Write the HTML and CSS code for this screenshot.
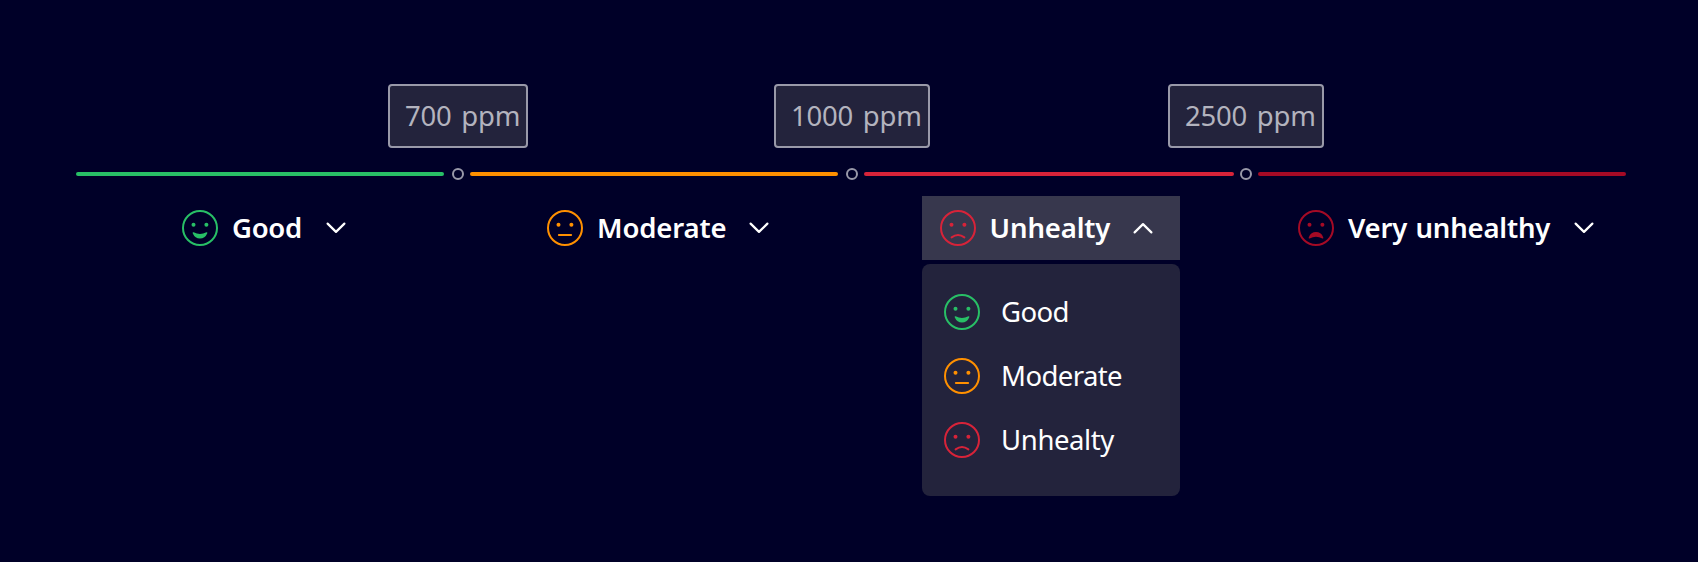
FILE: index.html
```html
<!DOCTYPE html>
<html lang="en">
<head>
<meta charset="utf-8">
<title>Air quality thresholds</title>
<link rel="stylesheet" href="styles.css">
</head>
<body>
<svg class="defs" width="0" height="0" aria-hidden="true">
  <symbol id="face" viewBox="0 0 36 36">
    <circle cx="18" cy="18" r="17" fill="none" stroke="currentColor" stroke-width="2"/>
    <circle cx="11.5" cy="14.7" r="2" fill="currentColor"/>
    <circle cx="24.4" cy="14.7" r="2" fill="currentColor"/>
  </symbol>
  <symbol id="good" viewBox="0 0 36 36">
    <use href="#face"/>
    <path d="M11.6 22.2Q18 25.6 24.4 22.2Q25.8 22 25.2 23.4Q23 28.4 18 28.4Q13 28.4 10.8 23.4Q10.2 22 11.6 22.2Z" fill="currentColor"/>
  </symbol>
  <symbol id="moderate" viewBox="0 0 36 36">
    <use href="#face"/>
    <path d="M11.9 25H24.1" stroke="currentColor" stroke-width="2" stroke-linecap="round"/>
  </symbol>
  <symbol id="unhealthy" viewBox="0 0 36 36">
    <use href="#face"/>
    <path d="M11.6 27.4Q18 22.6 24.4 27.4" fill="none" stroke="currentColor" stroke-width="2" stroke-linecap="round"/>
  </symbol>
  <symbol id="very" viewBox="0 0 36 36">
    <use href="#face"/>
    <path d="M11.6 28.4Q18 25 24.4 28.4Q25.8 28.6 25.2 27.2Q23 22.1 18 22.1Q13 22.1 10.8 27.2Q10.2 28.6 11.6 28.4Z" fill="currentColor"/>
  </symbol>
  <symbol id="chevron" viewBox="0 0 20 12">
    <path d="M1.6 1.6L10 9.9L18.4 1.6" fill="none" stroke="currentColor" stroke-width="2.2" stroke-linecap="round" stroke-linejoin="round"/>
  </symbol>
</svg>
<main class="scale">
  <div class="inputs">
    <div class="input input-700"><span class="value">700 ppm</span></div>
    <div class="input input-1000"><span class="value">1000 ppm</span></div>
    <div class="input input-2500"><span class="value">2500 ppm</span></div>
  </div>
  <div class="track">
    <span class="segment bg-good"></span><span class="knob"></span>
    <span class="segment bg-moderate"></span><span class="knob"></span>
    <span class="segment segment-wide bg-unhealthy"></span><span class="knob knob-last"></span>
    <span class="segment bg-very"></span>
  </div>
  <div class="levels">
    <div class="level level-good">
      <svg class="icon good"><use href="#good"/></svg>
      <span class="label">Good</span>
      <svg class="chevron"><use href="#chevron"/></svg>
    </div>
    <div class="level level-moderate">
      <svg class="icon moderate"><use href="#moderate"/></svg>
      <span class="label">Moderate</span>
      <svg class="chevron"><use href="#chevron"/></svg>
    </div>
    <div class="level level-unhealthy open">
      <svg class="icon unhealthy"><use href="#unhealthy"/></svg>
      <span class="label">Unhealty</span>
      <svg class="chevron up"><use href="#chevron"/></svg>
      <div class="menu">
        <div class="option"><svg class="icon good"><use href="#good"/></svg><span class="option-good">Good</span></div>
        <div class="option"><svg class="icon moderate"><use href="#moderate"/></svg><span class="option-moderate">Moderate</span></div>
        <div class="option"><svg class="icon unhealthy"><use href="#unhealthy"/></svg><span class="option-unhealthy">Unhealty</span></div>
      </div>
    </div>
    <div class="level level-very">
      <svg class="icon very"><use href="#very"/></svg>
      <span class="label">Very unhealthy</span>
      <svg class="chevron"><use href="#chevron"/></svg>
    </div>
  </div>
</main>
</body>
</html>
```
FILE: styles.css
```css
* { box-sizing: border-box; }
body {
  margin: 0;
  height: 562px;
  overflow: hidden;
  background: #000028;
  color: #fff;
  font: 27.5px/36px "Noto Sans", sans-serif;
  white-space: nowrap;
}
.defs { position: absolute; }
.scale { padding: 84px 72px 0 76px; }
.inputs { display: flex; padding-left: 312px; }
.input {
  height: 64px;
  padding: 12px 0 0 15px;
  border: 2px solid #9999a9;
  border-radius: 4px;
  background: #23233c;
  color: #b3b3be;
  letter-spacing: -0.2px;
  word-spacing: 2.8px;
}
.input-700 { width: 140px; margin-right: 246px; }
.input-1000 { width: 156px; margin-right: 238px; }
.input-2500 { width: 156px; }
.track { display: flex; align-items: center; height: 12px; margin-top: 20px; }
.segment { width: 368px; height: 4px; border-radius: 2px; }
.segment-wide { width: 370px; }
.knob { width: 12px; height: 12px; margin: 0 6px 0 8px; border: 2px solid #9999a9; border-radius: 50%; }
.knob-last { margin: 0 6px; }
.bg-good { background: #28bf66; }
.bg-moderate { background: #ff9000; }
.bg-unhealthy { background: #d72339; }
.bg-very { background: #a50a25; }
.good { color: #28bf66; }
.moderate { color: #ff9000; }
.unhealthy { color: #d72339; }
.very { color: #a50a25; }
.levels { display: flex; margin-top: 16px; }
.level { position: relative; display: flex; align-items: center; height: 64px; padding-left: 18px; }
.level-good { width: 199px; margin: 0 166px 0 88px; }
.level-moderate { width: 258px; margin-right: 134.6px; }
.level-unhealthy { width: 258px; margin-right: 100.4px; }
.level-very { width: 330px; }
.open { background: #37374d; }
.icon { flex: none; width: 36px; height: 36px; }
.label { flex: none; margin-left: 14px; font-weight: 600; letter-spacing: -0.15px; }
.level-good .label { width: 94px; letter-spacing: -0.3px; }
.level-moderate .label { width: 152px; }
.level-unhealthy .label { width: 143.4px; }
.level-very .label { width: 226px; letter-spacing: -0.2px; word-spacing: 1.5px; }
.chevron { flex: none; width: 20px; height: 12px; }
.up { transform: rotate(180deg); }
.menu {
  position: absolute;
  top: 68px;
  left: 0;
  width: 258px;
  height: 232px;
  padding-top: 16px;
  border-radius: 8px;
  background: #23233c;
}
.option { display: flex; align-items: center; gap: 21.5px; height: 64px; padding-left: 22px; letter-spacing: -0.6px; }
.option-unhealthy { letter-spacing: -0.4px; }
```
